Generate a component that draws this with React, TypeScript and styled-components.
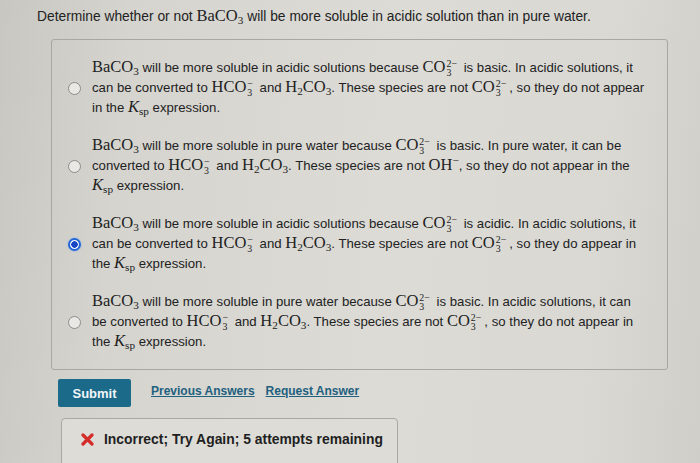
import * as React from "react"
import styled, { createGlobalStyle } from "styled-components"

const GlobalStyle = createGlobalStyle`
  body {
    margin: 0;
    background: #d6d5d0;
  }
`

// chemistry / math bits
const Chem = styled.span`
  font-family: "Liberation Serif", "DejaVu Serif", serif;
  font-size: 16.5px;
  line-height: 1;
  color: #222;
`

const Sub = styled.sub`
  font-size: 0.68em;
  vertical-align: -0.3em;
  line-height: 0;
`

const Sup = styled.sup`
  font-size: 0.68em;
  vertical-align: 0.55em;
  line-height: 0;
`

const Stack = styled.span`
  display: inline-flex;
  flex-direction: column;
  align-items: flex-start;
  vertical-align: middle;
  font-size: 0.6em;
  line-height: 0.95;
  margin: -4px 3px -4px 1px;
`

const Ion = ({ base, sub, charge }: { base: string; sub: string; charge: string }) => (
  <Chem>
    {base}
    <Stack>
      <span>{charge}</span>
      <span>{sub}</span>
    </Stack>
  </Chem>
)

const BaCO3 = () => (
  <Chem>
    BaCO<Sub>3</Sub>
  </Chem>
)

const H2CO3 = () => (
  <Chem>
    H<Sub>2</Sub>CO<Sub>3</Sub>
  </Chem>
)

const Ksp = () => (
  <Chem>
    <i>K</i>
    <Sub>sp</Sub>
  </Chem>
)

const OH = () => (
  <Chem>
    OH<Sup>−</Sup>
  </Chem>
)

const CO3 = () => <Ion base="CO" sub="3" charge="2−" />
const HCO3 = () => <Ion base="HCO" sub="3" charge="−" />

const options: React.ReactNode[][] = [
  [
    <>
      <BaCO3 /> will be more soluble in acidic solutions because <CO3 /> is basic. In acidic solutions, it
    </>,
    <>
      can be converted to <HCO3 /> and <H2CO3 />. These species are not <CO3 />, so they do not appear
    </>,
    <>
      in the <Ksp /> expression.
    </>,
  ],
  [
    <>
      <BaCO3 /> will be more soluble in pure water because <CO3 /> is basic. In pure water, it can be
    </>,
    <>
      converted to <HCO3 /> and <H2CO3 />. These species are not <OH />, so they do not appear in the
    </>,
    <>
      <Ksp /> expression.
    </>,
  ],
  [
    <>
      <BaCO3 /> will be more soluble in acidic solutions because <CO3 /> is acidic. In acidic solutions, it
    </>,
    <>
      can be converted to <HCO3 /> and <H2CO3 />. These species are not <CO3 />, so they do appear in
    </>,
    <>
      the <Ksp /> expression.
    </>,
  ],
  [
    <>
      <BaCO3 /> will be more soluble in pure water because <CO3 /> is basic. In acidic solutions, it can
    </>,
    <>
      be converted to <HCO3 /> and <H2CO3 />. These species are not <CO3 />, so they do not appear in
    </>,
    <>
      the <Ksp /> expression.
    </>,
  ],
]

const App = () => (
  <>
    <GlobalStyle />
    <Page>
      <Question>
        Determine whether or not <BaCO3 /> will be more soluble in acidic solution than in pure water.
      </Question>

      <Card>
        {options.map((lines, i) => (
          <Option key={i}>
            <Radio $checked={i === 2} />
            <OptionText>
              {lines.map((line, j) => (
                <Line key={j}>{line}</Line>
              ))}
            </OptionText>
          </Option>
        ))}
      </Card>

      <Actions>
        <SubmitButton>Submit</SubmitButton>
        <LinkButton>Previous Answers</LinkButton>
        <LinkButton>Request Answer</LinkButton>
      </Actions>

      <Feedback>
        <svg width="13" height="13" viewBox="0 0 13 13">
          <path d="M2 2 L11 11 M11 2 L2 11" stroke="#d42b2b" strokeWidth="3.2" strokeLinecap="round" />
        </svg>
        <FeedbackText>Incorrect; Try Again; 5 attempts remaining</FeedbackText>
      </Feedback>
    </Page>
  </>
)

export default App

const Page = styled.div`
  width: 700px;
  height: 463px;
  overflow: hidden;
  box-sizing: border-box;
  padding: 8px 0 0 37px;
  background: linear-gradient(95deg, #c8c7c2 0%, #d5d4cf 18%, #dcdbd6 55%, #d9d8d3 85%, #cfcec9 100%);
  font-family: "Liberation Sans", Arial, sans-serif;
  color: #222;
`

const Question = styled.div`
  font-size: 13.8px;
  line-height: 18px;
  height: 18px;
  white-space: nowrap;
`

const Card = styled.div`
  margin: 13px 0 0 14px;
  width: 617px;
  box-sizing: border-box;
  padding: 18px 16px 17px 16px;
  border: 1px solid #a8a7a2;
  border-radius: 3px;
  display: grid;
  gap: 18px;
`

const Option = styled.div`
  display: flex;
  align-items: center;
  gap: 11px;
`

const Radio = styled.span<{ $checked?: boolean }>`
  flex: none;
  width: 13px;
  height: 13px;
  box-sizing: border-box;
  border-radius: 50%;
  border: ${(p) => (p.$checked ? "2px solid #2366d6" : "1.5px solid #8c8c8a")};
  background: ${(p) =>
    p.$checked ? "radial-gradient(circle, #1747c4 0 3px, #f4f6fb 3.5px)" : "#e9e8e4"};
  box-shadow: ${(p) => (p.$checked ? "0 0 2px #7aa6f0" : "none")};
`

const OptionText = styled.div`
  font-size: 13.2px;
  line-height: 20px;
`

const Line = styled.span`
  display: block;
  height: 20px;
  white-space: nowrap;
`

const Actions = styled.div`
  display: flex;
  align-items: center;
  margin: 9px 0 0 21px;
`

const SubmitButton = styled.button`
  width: 73px;
  height: 28px;
  border: none;
  border-radius: 2px;
  background: #1b6a8a;
  color: #f2f6f8;
  font-family: "Liberation Sans", Arial, sans-serif;
  font-size: 13px;
  font-weight: 700;
  margin-right: 20px;
  padding: 0;
`

const LinkButton = styled.a`
  font-size: 12px;
  font-weight: 700;
  color: #22607f;
  text-decoration: underline;
  margin-right: 11px;
  margin-top: -5px;
`

const Feedback = styled.div`
  margin: 11px 0 0 24px;
  width: 337px;
  height: 60px;
  box-sizing: border-box;
  border: 1px solid #a9a8a3;
  border-radius: 4px;
  background: #dddcd7;
  display: flex;
  align-items: flex-start;
  gap: 10px;
  padding: 14px 0 0 19px;
`

const FeedbackText = styled.span`
  font-size: 13.9px;
  font-weight: 700;
  line-height: 13px;
  color: #1f1f1f;
`
